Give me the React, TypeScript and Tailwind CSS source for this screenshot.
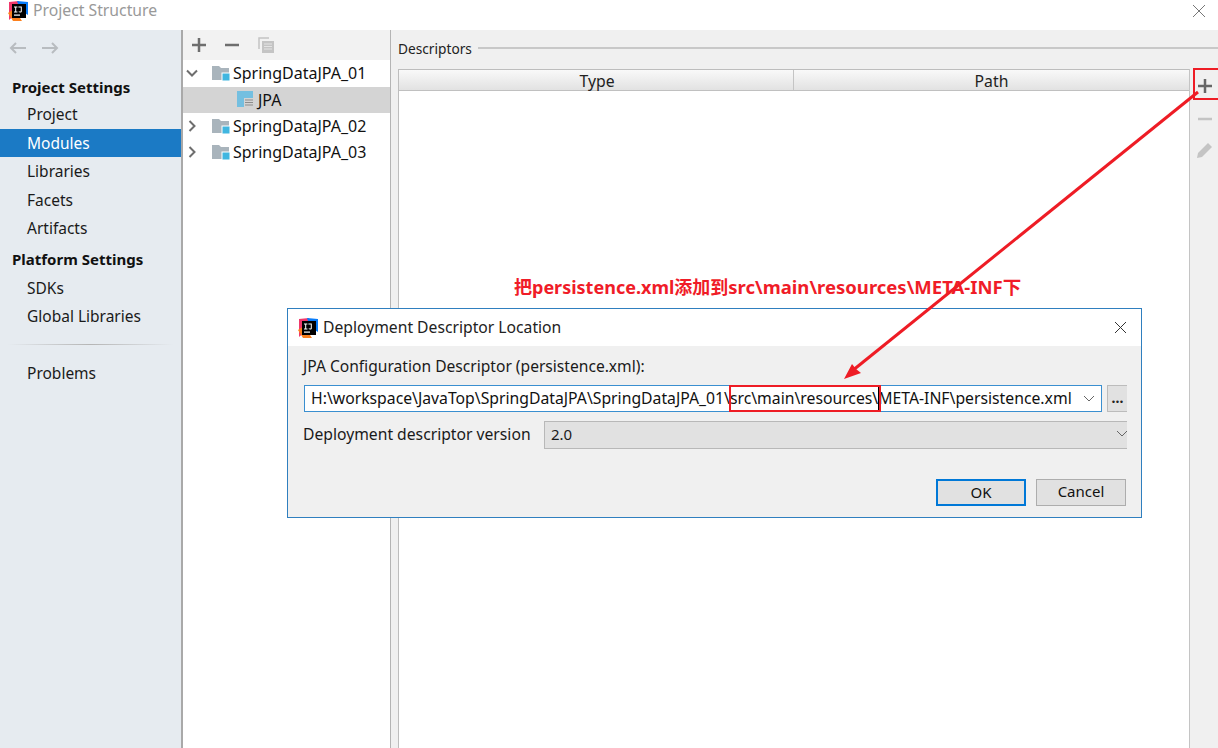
const FONT = "font-['Noto_Sans','Open_Sans','Noto_Sans_CJK_SC',sans-serif]";

function IdeaLogo({ size = 20 }: { size?: number }) {
  return (
    <svg width={size} height={size} viewBox="0 0 20 20" className="shrink-0">
      <path d="M1 1 L11 0 L9 12 L1 19 Z" fill="#f0386b" />
      <path d="M9 0 L20 1 L20 14 L12 9 Z" fill="#087cfa" />
      <path d="M0 12 L5 20 L14 20 L6 8 Z" fill="#fc801d" />
      <rect x="4" y="3" width="14" height="14" fill="#000" />
      <rect x="6" y="13.5" width="6" height="1.2" fill="#fff" />
      <path d="M6 5.5h3.4v1H8.2v4h1.2v1H6v-1h1.2v-4H6zM10.4 5.5h3.4v4.7c0 1-.6 1.4-1.7 1.4-.7 0-1.2-.2-1.6-.5l.5-.8c.3.2.6.3 1 .3.5 0 .8-.2.8-.6V6.500h-2.400z" fill="#fff" />
    </svg>
  );
}

function ModuleIcon() {
  return (
    <svg width="18" height="16" viewBox="0 0 18 16" className="shrink-0">
      <path d="M0 1h7l2 2h8v12H0z" fill="#9aa7b0" opacity="0.85" />
      <rect x="10" y="8" width="8" height="8" fill="#40b6e0" stroke="#fff" strokeWidth="1" />
    </svg>
  );
}

function Chevron({ open }: { open: boolean }) {
  return (
    <svg width="12" height="12" viewBox="0 0 12 12" className="shrink-0">
      <path
        d={open ? "M1 3.500 L6 8.500 L11 3.500" : "M3.500 1 L8.500 6 L3.500 11"}
        fill="none"
        stroke="#6e6e6e"
        strokeWidth="2"
      />
    </svg>
  );
}

function SideItem({ label, active }: { label: string; active?: boolean }) {
  return (
    <div className={`h-[28.500px] pl-[27px] leading-[28px] text-[15.500px] ${active ? "bg-[#1b7ac5] text-white" : "text-[#1a1a1a]"}`}>
      {label}
    </div>
  );
}

function Sidebar() {
  return (
    <aside className="w-[181px] shrink-0 bg-[#e6ebf0]">
      <div className="flex h-[36px] items-center gap-[14px] pl-[9px]">
        <svg width="18" height="12" viewBox="0 0 18 12"><path d="M17 6H2M7 1 2 6l5 5" fill="none" stroke="#b8bcc0" strokeWidth="2" /></svg>
        <svg width="18" height="12" viewBox="0 0 18 12"><path d="M1 6h15M11 1l5 5-5 5" fill="none" stroke="#b8bcc0" strokeWidth="2" /></svg>
      </div>
      <div className="pl-3 pt-[7px] h-[34px] text-[15px] font-bold leading-[28px] text-[#111]">Project Settings</div>
      <SideItem label="Project" />
      <SideItem label="Modules" active />
      <SideItem label="Libraries" />
      <SideItem label="Facets" />
      <SideItem label="Artifacts" />
      <div className="pl-3 h-[31px] text-[15px] font-bold leading-[33px] text-[#111]">Platform Settings</div>
      <SideItem label="SDKs" />
      <SideItem label="Global Libraries" />
      <div className="mx-[8px] mt-[13px] mb-[14px] h-px bg-gradient-to-r from-[#e6ebf0] via-[#b5b5b5] to-[#e6ebf0]" />
      <SideItem label="Problems" />
    </aside>
  );
}

function TreeRow({ label, open }: { label: string; open: boolean }) {
  return (
    <div className="flex h-[26.500px] items-center pl-[3px] text-[16px] text-[#111]">
      <Chevron open={open} />
      <span className="ml-[14px] mr-[3px] flex"><ModuleIcon /></span>
      <span>{label}</span>
    </div>
  );
}

function ModuleTree() {
  return (
    <section className="flex w-[210px] shrink-0 flex-col border-l-2 border-r border-l-[#a9a9a9] border-r-[#b4b4b4]">
      <div className="flex h-[30px] items-center gap-[19px] bg-[#f2f2f2] pl-[9px]">
        <svg width="14" height="14" viewBox="0 0 14 14"><path d="M7 0v14M0 7h14" stroke="#6e6e6e" strokeWidth="2.500" /></svg>
        <svg width="14" height="14" viewBox="0 0 14 14"><path d="M0 7h14" stroke="#6e6e6e" strokeWidth="2.500" /></svg>
        <svg width="16" height="16" viewBox="0 0 16 16">
          <path d="M1 12V1H11" fill="none" stroke="#c4c4c4" strokeWidth="1.500" />
          <rect x="4" y="4" width="12" height="12" fill="#c4c4c4" />
          <path d="M6 7h8M6 9.500h8M6 12h8" stroke="#e4e4e4" />
        </svg>
      </div>
      <div className="flex-1 bg-white">
        <TreeRow label="SpringDataJPA_01" open />
        <div className="flex h-[26px] items-center bg-[#d4d4d4] pl-[54px] text-[16px] text-[#111]">
          <svg width="17" height="17" viewBox="0 0 17 17" className="shrink-0">
            <rect x="0" y="0" width="16" height="16" fill="#74bfe0" />
            <rect x="7" y="7" width="10" height="10" fill="#d4d4d4" />
            <path d="M8 9h8M8 11.500h8M8 14h8" stroke="#8c8c8c" />
          </svg>
          <span className="ml-[4px]">JPA</span>
        </div>
        <TreeRow label="SpringDataJPA_02" open={false} />
        <TreeRow label="SpringDataJPA_03" open={false} />
      </div>
    </section>
  );
}

function Descriptors() {
  return (
    <section className="flex min-w-0 flex-1 flex-col bg-[#f0f0f0]">
      <div className="flex h-[39px] shrink-0 items-center pl-[7px] text-[13.700px] text-[#222]">
        <span>Descriptors</span>
        <span className="mb-[3px] ml-[6px] h-[2px] flex-1 bg-[#c8c8c8]" />
      </div>
      <div className="flex min-h-0 flex-1">
        <div className="ml-[7px] flex min-w-0 flex-1 flex-col border-l border-t border-[#bdbdbd] bg-white">
          <div className="flex h-[21px] border-b border-[#c0c0c0] bg-gradient-to-b from-[#f9f9f9] to-[#e2e2e2] text-[15.750px] leading-[22px] text-[#222]">
            <div className="w-[395px] border-r border-[#c4c4c4] pl-[2px] text-center">Type</div>
            <div className="flex-1 text-center">Path</div>
          </div>
        </div>
        <div className="flex w-[29px] shrink-0 flex-col items-center border-l border-[#c4c4c4] pl-[2px] pt-[10px]">
          <svg width="14" height="14" viewBox="0 0 14 14"><path d="M7 0v14M0 7h14" stroke="#666" strokeWidth="2.500" /></svg>
          <svg width="14" height="14" viewBox="0 0 14 14" className="mt-[19px]"><path d="M0 7h14" stroke="#c4c4c4" strokeWidth="2.500" /></svg>
          <svg width="18" height="18" viewBox="0 0 18 18" className="mt-[15px]"><path d="M1 17l1-5L12 2l4 4L6 16z" fill="#c4c4c4" /></svg>
        </div>
      </div>
    </section>
  );
}

function DeploymentDialog() {
  return (
    <div className="absolute left-[287px] top-[308px] h-[210px] w-[855px] border border-[#2f7fbf] bg-[#f0f0f0]">
      <div className="flex h-[37px] items-center bg-white pl-[10px] pr-[14px] text-[15.700px] text-[#222]">
        <IdeaLogo size={20} />
        <span className="ml-[5px]">Deployment Descriptor Location</span>
        <svg width="13" height="13" viewBox="0 0 13 13" className="ml-auto"><path d="M1 1l11 11M12 1L1 12" stroke="#333" /></svg>
      </div>
      <div className="pl-[15px] pr-[14px]">
        <div className="h-[39px] pt-[9px] text-[15.600px] leading-[22px] text-[#1a1a1a]">JPA Configuration Descriptor (persistence.xml):</div>
        <div className="flex h-[27px] items-center">
          <div className="ml-[1px] flex h-[27px] w-[798px] items-center border border-[#3a8fd0] bg-white pl-[6px] text-[15.750px] text-[#111]">
            <span className="flex-1 whitespace-nowrap">H:\workspace\JavaTop\SpringDataJPA\SpringDataJPA_01\src\main\resources\META-INF\persistence.xml</span>
            <svg width="12" height="8" viewBox="0 0 12 8" className="mr-[6px]"><path d="M1 1l5 5 5-5" fill="none" stroke="#666" /></svg>
          </div>
          <div className="ml-[5px] flex h-[27px] w-[20px] items-start justify-center border-y border-l border-[#bcbcbc] bg-[#e1e1e1] text-[14px] font-bold leading-[24px] text-[#222]">...</div>
        </div>
        <div className="mt-[9px] flex h-[28px] items-center text-[15.700px] text-[#1a1a1a]">
          <span className="w-[241px]">Deployment descriptor version</span>
          <div className="flex h-[28px] flex-1 items-center border-y border-l border-[#b8b8b8] bg-[#e1e1e1] pb-[2px] pl-[6px] text-[15px]">
            <span className="flex-1">2.0</span>
            <svg width="12" height="8" viewBox="0 0 12 8" className="-mr-[1px]"><path d="M1 1l5 5 5-5" fill="none" stroke="#666" /></svg>
          </div>
        </div>
        <div className="mt-[30px] flex justify-end gap-[10px] pr-[1px]">
          <button className="h-[27px] w-[90px] border-2 border-[#0078d7] bg-[#e1e1e1] pb-[2px] text-[15px] text-[#111]">OK</button>
          <button className="h-[27px] w-[90px] border border-[#adadad] bg-[#e1e1e1] pb-[2px] text-[15px] text-[#111]">Cancel</button>
        </div>
      </div>
    </div>
  );
}

export default function App() {
  return (
    <div className={`relative h-[748px] w-[1218px] overflow-hidden bg-white ${FONT}`}>
      <header className="flex h-[30px] items-center bg-white pb-2 pl-[8px]">
        <IdeaLogo size={20} />
        <span className="ml-[5px] text-[15.750px] text-[#999]">Project Structure</span>
        <svg width="14" height="14" viewBox="0 0 14 14" className="ml-auto mr-[12px]"><path d="M1 1l12 12M13 1L1 13" stroke="#777" /></svg>
      </header>
      <div className="flex h-[718px]">
        <Sidebar />
        <ModuleTree />
        <Descriptors />
      </div>
      <DeploymentDialog />

      {/* annotations */}
      <div className="absolute left-[514px] top-[275px] whitespace-nowrap text-[18px] font-bold leading-[24px] text-[#f01c28]">
        把persistence.xml添加到<span className="text-[18.500px]">src\main\resources\META-INF下</span>
      </div>
      <div className="absolute left-[878px] top-[387px] h-[23px] w-px bg-black" />
      <div className="absolute left-[729px] top-[385px] h-[27px] w-[152px] border-2 border-[#ee1c25]" />
      <div className="absolute left-[1193px] top-[68px] h-[32px] w-[25px] border-2 border-r-0 border-[#ee1c25]" />
      <svg width="1218" height="748" className="pointer-events-none absolute left-0 top-0">
        <path d="M1198 92 L852 371" stroke="#ee1c25" strokeWidth="3" />
        <path d="M844 379 L852 364 L856 369 L861 373 Z" fill="#ee1c25" />
      </svg>
    </div>
  );
}
